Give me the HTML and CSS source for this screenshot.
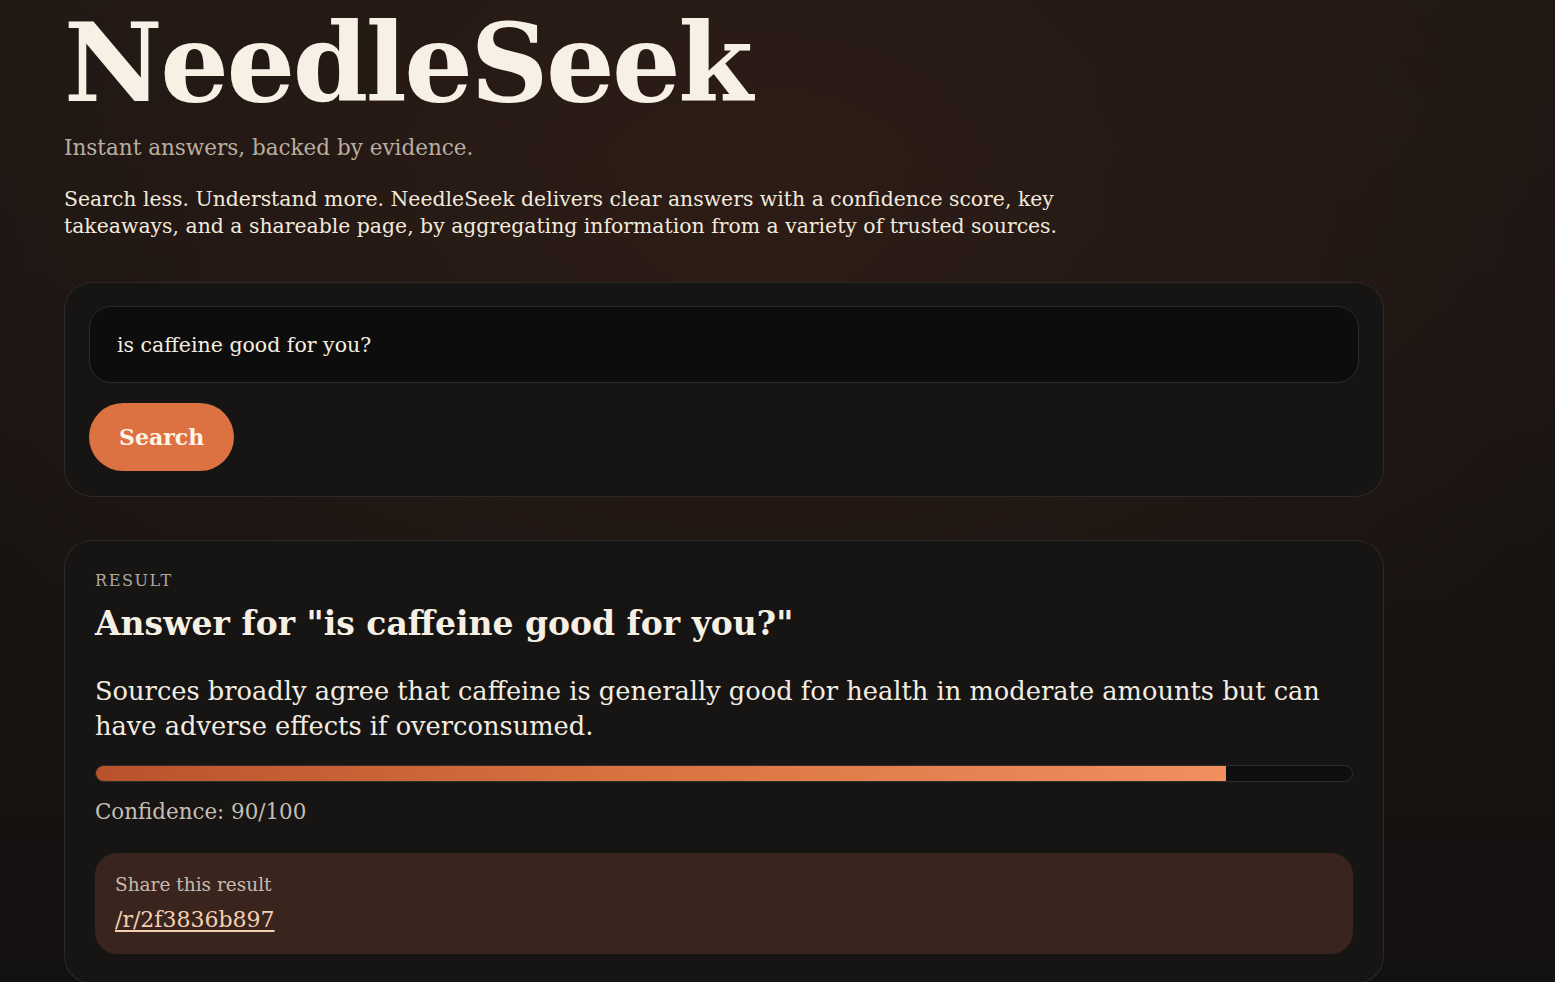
FILE: index.html
```html
<!DOCTYPE html>
<html lang="en">
  <head>
    <meta charset="utf-8">
    <meta name="viewport" content="width=device-width, initial-scale=1">
    <title>NeedleSeek</title>
    <link rel="stylesheet" href="styles.css">
  </head>
  <body>
    <main class="page">
      <header class="hero">
        <h1 class="brand">NeedleSeek</h1>
        <p class="tagline">Instant answers, backed by evidence.</p>
        <p class="intro">Search less. Understand more. NeedleSeek delivers clear answers with a confidence score, key takeaways, and a shareable page, by aggregating information from a variety of trusted sources.</p>
      </header>

      <form class="card search" onsubmit="return false">
        <input class="search-input" type="text" name="q" value="is caffeine good for you?">
        <div>
          <button class="search-btn" type="submit">Search</button>
        </div>
      </form>

      <section class="card result">
        <p class="eyebrow">RESULT</p>
        <h2 class="result-title">Answer for "is caffeine good for you?"</h2>
        <p class="answer">Sources broadly agree that caffeine is generally good for health in moderate amounts but can have adverse effects if overconsumed.</p>
        <div class="meter">
          <div class="meter-fill" style="width: 90%"></div>
        </div>
        <p class="confidence">Confidence: 90/100</p>
        <div class="share">
          <p class="share-label">Share this result</p>
          <a class="share-link" href="#">/r/2f3836b897</a>
        </div>
      </section>
    </main>
  </body>
</html>
```

FILE: styles.css
```css
*, *::before, *::after {
  box-sizing: border-box;
}

html, body {
  margin: 0;
  min-height: 100%;
}

body {
  font-family: "DejaVu Serif", Georgia, serif;
  font-variant-numeric: oldstyle-nums;
  color: #f3ece1;
  background:
    radial-gradient(ellipse 950px 620px at 760px 200px, #2d1c16 0%, rgba(45, 28, 22, 0) 100%),
    linear-gradient(180deg, #1f1714 0%, #131110 100%);
  background-color: #171311;
  min-height: 982px;
}

.page {
  max-width: 1448px;
  padding: 0 64px;
}

/* header */

.hero {
  max-width: 1320px;
}

.brand {
  margin: 0;
  font-size: 108px;
  line-height: 126px;
  font-weight: 700;
  letter-spacing: -2.5px;
  color: #f6f0e5;
}

.tagline {
  margin: 8px 0 0;
  font-size: 21.5px;
  line-height: 28px;
  color: #b9ae9f;
}

.intro {
  margin: 24px 0 0;
  max-width: 1010px;
  font-size: 20.4px;
  line-height: 27px;
  color: #f1e9dc;
}

/* cards */

.card {
  max-width: 1320px;
  background: #161514;
  border: 1px solid rgba(255, 255, 255, 0.09);
  border-radius: 28px;
}

.search {
  margin-top: 42px;
  padding: 23px 24px 25px;
  display: flex;
  flex-direction: column;
  gap: 20px;
}

.search-input {
  width: 100%;
  height: 77px;
  padding: 0 27px;
  font-family: inherit;
  font-size: 20.5px;
  color: #f4ede2;
  background: #0d0d0d;
  border: 1px solid #2a2928;
  border-radius: 22px;
  outline: none;
}

.search-btn {
  height: 68px;
  padding: 0 30px;
  font-family: inherit;
  font-size: 22px;
  font-weight: 700;
  color: #fff4e8;
  background: #dc7142;
  border: 0;
  border-radius: 34px;
  cursor: pointer;
}

.result {
  margin-top: 43px;
  padding: 28px 30px 29px;
}

.eyebrow {
  margin: 0;
  font-size: 16px;
  line-height: 24px;
  letter-spacing: 1.6px;
  color: #b2a99d;
}

.result-title {
  margin: 11px 0 0;
  font-size: 33px;
  line-height: 40px;
  font-weight: 700;
  color: #f5efe4;
}

.answer {
  margin: 30px 0 0;
  font-size: 25.7px;
  line-height: 35px;
  color: #f3ece1;
}

.meter {
  margin-top: 21px;
  height: 17px;
  background: #0f0f0f;
  border: 1px solid #2f2e2d;
  border-radius: 9px;
  overflow: hidden;
}

.meter-fill {
  height: 100%;
  background: linear-gradient(90deg, #b9522b 0%, #d7713f 45%, #f28f5f 100%);
}

.confidence {
  margin: 15px 0 0;
  font-size: 21.4px;
  line-height: 30px;
  color: #c7beb2;
}

.share {
  margin-top: 26px;
  padding: 18px 20px 19px;
  background: #3a241e;
  border-radius: 22px;
}

.share-label {
  margin: 0;
  font-size: 18.5px;
  line-height: 28px;
  color: #c8bbae;
}

.share-link {
  display: inline-block;
  margin-top: 6px;
  font-size: 22px;
  line-height: 30px;
  color: #f6cfb2;
  text-decoration: underline;
  text-underline-offset: 3px;
}
```
